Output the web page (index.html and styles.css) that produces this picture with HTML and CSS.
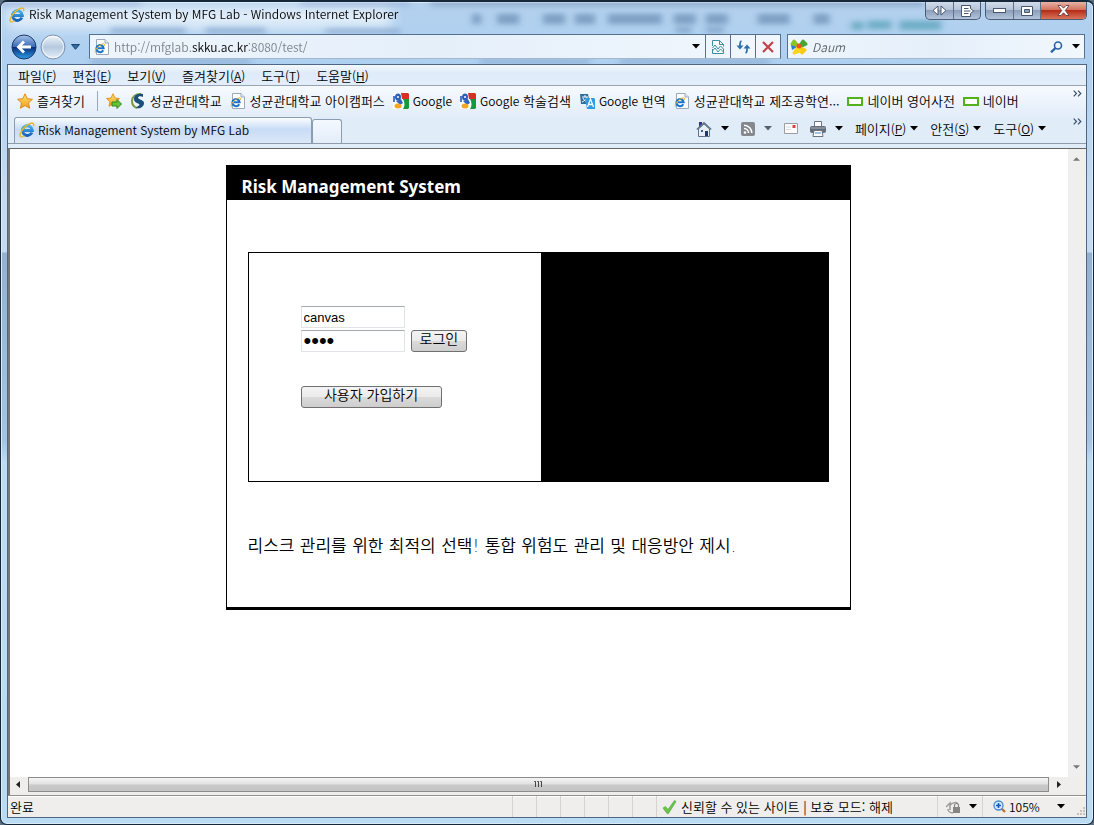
FILE: index.html
```html
<!DOCTYPE html>
<html lang="ko">
<head>
<meta charset="utf-8">
<title>Risk Management System by MFG Lab</title>
<link rel="stylesheet" href="styles.css">
</head>
<body>
<svg class="defs" aria-hidden="true">
  <defs>
    <linearGradient id="gStar" x1="0" y1="0" x2="0" y2="1"><stop offset="0" stop-color="#ffe873"/><stop offset="1" stop-color="#f39a17"/></linearGradient>
    <linearGradient id="gBlue" x1="0" y1="0" x2="0" y2="1"><stop offset="0" stop-color="#46b4ee"/><stop offset="1" stop-color="#1560b8"/></linearGradient>
    <linearGradient id="gBack" x1="0" y1="0" x2="0" y2="1"><stop offset="0" stop-color="#a8c4e8"/><stop offset=".48" stop-color="#3d6cb8"/><stop offset=".52" stop-color="#0c2f7c"/><stop offset="1" stop-color="#2aa0e8"/></linearGradient>
    <linearGradient id="gFwd" x1="0" y1="0" x2="0" y2="1"><stop offset="0" stop-color="#f2f6fb"/><stop offset=".5" stop-color="#b4c9df"/><stop offset="1" stop-color="#e6eff8"/></linearGradient>
    <symbol id="ie" viewBox="0 0 16 16">
      <path d="M12.900 10.500A4.900 4.900 0 1 1 13.300 8.400H5" fill="none" stroke="url(#gBlue)" stroke-width="3"/>
      <path d="M1.600 14.800C-.6 12 5.300 3.600 11.400 1.400c2.600-.9 4 .4 3 2.800" fill="none" stroke="#e9b52c" stroke-width="1.500"/>
      <path d="M1.600 14.800c1 .7 2.500 0 4-1" fill="none" stroke="#e9b52c" stroke-width="1.300"/>
    </symbol>
    <symbol id="page" viewBox="0 0 16 16">
      <path d="M2.500.5h8.500l3.500 3.500v11.500h-12z" fill="#fff" stroke="#9aa9bb"/>
      <path d="M11 .5V4h3.500" fill="#e6edf5" stroke="#9aa9bb"/>
      <path d="M9.200 11.300A3.600 3.600 0 1 1 9.600 9.300H4" fill="none" stroke="#1c74c8" stroke-width="2.100"/>
      <path d="M1.300 13.800C.4 11.500 4 6.500 8.500 5c1.800-.6 2.600.3 2 1.800" fill="none" stroke="#e3ae28"/>
    </symbol>
    <symbol id="star" viewBox="0 0 16 16"><path d="M8 .8l2.200 4.900 5.200.6-3.900 3.600 1.100 5.300L8 12.600l-4.600 2.600 1.100-5.300L.6 6.300l5.200-.6z" fill="url(#gStar)" stroke="#e08a1c"/></symbol>
    <symbol id="google" viewBox="0 0 16 16">
      <rect width="16" height="16" fill="#fff"/><path d="M8 0h7l1 1v5H9z" fill="#d93025"/><path d="M10 6h6v9l-1 1h-5c2-3 2-6 0-10z" fill="#149a3c"/><path d="M0 3h2v6H0z" fill="#4a79cf"/>
      <ellipse cx="5" cy="4" rx="3" ry="3.500" fill="#2f5fb8"/><path d="M3 8l5-2 2 4-3 2z" fill="#3465bc"/><ellipse cx="5" cy="13" rx="3.500" ry="2.500" fill="#f5a623"/><circle cx="5" cy="4" r="1" fill="#fff"/>
    </symbol>
    <symbol id="naver" viewBox="0 0 16 16"><rect x="1" y="5" width="14" height="7" fill="#fff" stroke="#55b01e" stroke-width="2"/></symbol>
    <symbol id="down" viewBox="0 0 8 5"><path d="M0 0h8L4 4.500z" fill="currentColor"/></symbol>
    <symbol id="more" viewBox="0 0 9 7"><path d="M.7.7L3.500 3.500.7 6.300M5 .7l2.800 2.800L5 6.300" fill="none" stroke="#3a4f6c" stroke-width="1.200"/></symbol>
  </defs>
</svg>

<div class="window">
  <svg class="glass" viewBox="0 0 1094 64" preserveAspectRatio="none" aria-hidden="true">
    <defs>
      <filter id="soft" x="-5%" y="-50%" width="110%" height="200%"><feGaussianBlur stdDeviation="3"/></filter>
      <filter id="softer" x="-10%" y="-100%" width="120%" height="300%"><feGaussianBlur stdDeviation="7"/></filter>
    </defs>
    <path d="M6 5h385v22H6z" fill="#eef5fd" opacity=".85" filter="url(#softer)"/>
    <g filter="url(#soft)">
      <path d="M0 0h140v4H0zM300 0h110v4H300z" fill="#8fa6d0" opacity=".6"/>
      <path d="M110 26h75v7H110zM205 26h60v7H205zM325 27h75v6H325z" fill="#688fbb" opacity=".45"/>
      <path d="M430 0h495v4H430z" fill="#7289ad" opacity=".6"/>
      <path d="M472 12h9v11H472zM497 12h22v11H497zM543 12h22v11H543zM575 12h20v11H575zM608 12h54v11H608zM674 12h22v11H674zM706 12h22v11H706zM758 12h32v11H758zM814 12h16v11H814z" fill="#4d6f9b" opacity=".5"/>
      <path d="M676 26h16v6H676zM706 26h18v6H706z" fill="#5f82ab" opacity=".5"/>
      <path d="M852 20h12v9H852zM868 19h24v9H868zM900 19h42v10H900z" fill="#3991a6" opacity=".55"/>
      <path d="M90 60h160v3H90zM480 60h110v3H480zM620 60h150v3H620z" fill="#56789f" opacity=".5"/>
    </g>
  </svg>

  <header class="titlebar">
    <svg class="i16"><use href="#ie"/></svg>
    <span class="caption">Risk Management System by MFG Lab - Windows Internet Explorer</span>
    <div class="winbtns">
      <button aria-label="모니터 전환"><svg width="15" height="11" viewBox="0 0 15 11"><path d="M6 1v9L1 5.500zM9 1v9l5-4.500z" fill="#fff" stroke="#46576f"/></svg></button>
      <button aria-label="창 보내기"><svg width="13" height="12" viewBox="0 0 13 12"><path d="M.5.5h9v3L12.500 6l-3 2.500v3h-9z" fill="#fff" stroke="#46576f"/><path d="M3 3.500h4.500M3 6h6.500M3 8.500h4.500" stroke="#46576f"/></svg></button>
    </div>
    <div class="winbtns">
      <button aria-label="최소화"><svg width="13" height="5" viewBox="0 0 13 5"><rect x=".5" y=".5" width="12" height="4" fill="#fff" stroke="#46576f"/></svg></button>
      <button aria-label="이전 크기로 복원"><svg width="12" height="10" viewBox="0 0 12 10"><path d="M.5.5h11v9H.5z" fill="#fff" stroke="#46576f"/><path d="M3.500 3.500h5v3h-5z" fill="#8fa3bd" stroke="#46576f"/></svg></button>
      <button class="close" aria-label="닫기"><svg width="13" height="11" viewBox="0 0 13 11"><path d="M1 .5h3l2.500 2.700L9 .5h3L8.300 5.500l3.700 5H9L6.500 7.800 4 10.500H1l3.700-5z" fill="#fff" stroke="#5b3038" stroke-width=".8"/></svg></button>
    </div>
  </header>

  <div class="navbar">
    <div class="history">
      <button aria-label="뒤로"><svg width="26" height="26" viewBox="0 0 26 26"><circle cx="13" cy="13" r="12" fill="url(#gBack)" stroke="#1c3563"/><path d="M12 6.500L5.500 13l6.500 6.500 2-2-3-3h9v-3h-9l3-3z" fill="#fff"/></svg></button>
      <button aria-label="앞으로"><svg width="26" height="26" viewBox="0 0 26 26"><circle cx="13" cy="13" r="12" fill="url(#gFwd)" stroke="#7e92ac"/><circle cx="13" cy="13" r="10.500" fill="none" stroke="#fff" opacity=".7"/></svg></button>
      <button class="recent" aria-label="최근 페이지"><svg width="9" height="6" viewBox="0 0 9 6"><path d="M.5.5h8L4.500 5.300z" fill="#2f6ca6" stroke="#1d466f"/></svg></button>
    </div>
    <div class="field address">
      <svg class="i16"><use href="#page"/></svg>
      <a href="#" class="url">http://mfglab.<b>skku.ac.kr</b>:8080/test/</a>
      <button class="drop" aria-label="주소 목록"><svg class="dn"><use href="#down"/></svg></button>
      <button class="cell" aria-label="호환성 보기"><svg width="12" height="14" viewBox="0 0 12 14"><path d="M.5 6V.5h7l4 4v2M7.500.5v4h4M.5 9v4.500h11V9" fill="#fff" stroke="#3b8ea5"/><path d="M.5 8L3 5l3 4 2.500-3L11.500 9M.5 11L3 8l3 4 2.500-3 3 3" fill="none" stroke="#3b8ea5"/></svg></button>
      <button class="cell" aria-label="새로 고침"><svg width="15" height="14" viewBox="0 0 15 14"><path d="M5.500 1C3.500 1.500 4 4 4 7M9.500 13c2-.5 1.500-3 1.500-6" fill="none" stroke="#2f6da8" stroke-width="1.700"/><path d="M.5 5.500h7L4 9.500zM7.500 8.500h7l-3.500-4z" fill="#2f6da8"/></svg></button>
      <button class="cell" aria-label="중지"><svg width="12" height="12" viewBox="0 0 12 12"><path d="M1 1l10 10M11 1L1 11" stroke="#c5414a" stroke-width="2.200"/></svg></button>
    </div>
    <div class="field search">
      <svg class="i18" viewBox="0 0 18 18"><path d="M9 9L4 3 2 6z" fill="#8bc522" stroke="#8bc522" stroke-width="3" stroke-linejoin="round"/><path d="M9 9l4-6 3 3z" fill="#45a631" stroke="#45a631" stroke-width="3" stroke-linejoin="round"/><path d="M9 9l6 3-3 3z" fill="#f6c90d" stroke="#f6c90d" stroke-width="3" stroke-linejoin="round"/><path d="M1 7l6 2-5 3z" fill="#2b7bd0"/><path d="M4 15l4-6 2 4z" fill="#f9d51b" stroke="#f9d51b" stroke-width="3" stroke-linejoin="round"/><circle cx="9" cy="8" r="2.500" fill="#e9551d"/></svg>
      <input type="text" class="query" placeholder="Daum" aria-label="검색">
      <button aria-label="찾기"><svg width="13" height="12" viewBox="0 0 13 12"><circle cx="8" cy="4.500" r="3.500" fill="#eef6ff" stroke="#2b62a5" stroke-width="1.600"/><path d="M5.500 7L1 11.300" stroke="#2b62a5" stroke-width="2.400"/></svg></button>
      <button aria-label="검색 옵션"><svg class="dn"><use href="#down"/></svg></button>
    </div>
  </div>

  <div class="client">
    <nav class="menubar">
      <button>파일<span class="latin">(<u>F</u>)</span></button><button>편집<span class="latin">(<u>E</u>)</span></button><button>보기<span class="latin">(<u>V</u>)</span></button><button>즐겨찾기<span class="latin">(<u>A</u>)</span></button><button>도구<span class="latin">(<u>T</u>)</span></button><button>도움말<span class="latin">(<u>H</u>)</span></button>
    </nav>

    <div class="favorites">
      <button class="favbtn"><svg class="i16"><use href="#star"/></svg>즐겨찾기</button>
      <button class="addfav" aria-label="즐겨찾기 모음에 추가"><svg class="i16" viewBox="0 0 16 16"><use href="#star" width="14" height="14"/><path d="M6 9h5V6.500l4.500 4.500-4.500 4.500V13H6z" fill="#67c232" stroke="#2f8a1c"/></svg></button>
      <a href="#"><svg class="i16" viewBox="0 0 16 16"><path d="M11 1C5 1 2 4 2 8c0 4 2 6 5 7" fill="none" stroke="#7a9a3c" stroke-width="2"/><path d="M13 1C7 0 4 3 4 6c0 3 3 4 5 5 1 1 0 2-1 2l-2 2c4 1 8-1 8-5 0-3-4-3-6-5 0-2 3-2 5-1z" fill="#1c4f78"/></svg>성균관대학교</a>
      <a href="#"><svg class="i16"><use href="#page"/></svg>성균관대학교 아이캠퍼스</a>
      <a href="#"><svg class="i16"><use href="#google"/></svg><span class="latin">Google</span></a>
      <a href="#"><svg class="i16"><use href="#google"/></svg><span><span class="latin">Google</span> 학술검색</span></a>
      <a href="#"><svg class="i16" viewBox="0 0 16 16"><path d="M1 1h8l2 10H2z" fill="#2f6f9c"/><path d="M3 4h6M6 2v2M8 4c-1 3-3 4-5 5M4 5c1 2 2 3 4 4" stroke="#fff" fill="none"/><path d="M6 5h9l1 1v10H8z" fill="#2e9be0"/><path d="M8.500 14l3-8 3 8M9.500 11.500h4" fill="none" stroke="#fff" stroke-width="1.300"/></svg><span><span class="latin">Google</span> 번역</span></a>
      <a href="#"><svg class="i16"><use href="#page"/></svg>성균관대학교 제조공학연...</a>
      <a href="#"><svg class="i16"><use href="#naver"/></svg>네이버 영어사전</a>
      <a href="#"><svg class="i16"><use href="#naver"/></svg>네이버</a>
      <button class="more" aria-label="더 보기"><svg width="9" height="7"><use href="#more"/></svg></button>
    </div>

    <div class="tabrow">
      <button class="tab"><svg class="i16"><use href="#ie"/></svg><span>Risk Management System by MFG Lab</span></button>
      <button class="newtab" aria-label="새 탭"></button>
      <div class="commands">
        <button aria-label="홈"><svg class="i16" viewBox="0 0 16 16"><path d="M3 1h3v5H3z" fill="#34308f"/><path d="M2.500 8v7.500h11V8L8 3z" fill="#e8eef5" stroke="#60748f"/><path d="M.8 8.500L8 1.800l7.200 6.700" fill="none" stroke="#60748f" stroke-width="1.500"/><path d="M9 10h3v5H9z" fill="#1f3770"/><path d="M5 9h2v2H5z" fill="#41618f"/></svg><svg class="dn"><use href="#down"/></svg></button>
        <button class="dim" aria-label="피드"><svg width="14" height="14" viewBox="0 0 14 14"><rect width="14" height="14" rx="2" fill="#85888c"/><circle cx="4" cy="10.500" r="1.300" fill="#fff"/><path d="M3 6.500A4.500 4.500 0 0 1 7.500 11M3 3.200A7.800 7.800 0 0 1 10.800 11" fill="none" stroke="#fff" stroke-width="1.500"/></svg><svg class="dn"><use href="#down"/></svg></button>
        <button aria-label="메일"><svg width="14" height="11" viewBox="0 0 14 11"><path d="M.5.5h13v10H.5z" fill="#fbfbfb" stroke="#9b9da2"/><path d="M2 4h5M2 6.500h5" stroke="#dadce0"/><path d="M8.500 2h3v3h-3z" fill="#d4483f"/></svg></button>
        <button aria-label="인쇄"><svg class="i16" viewBox="0 0 16 16"><path d="M4.500 6V.5h7V6" fill="#fff" stroke="#6c7480"/><rect y="5" width="16" height="7" rx="2" fill="#656d78"/><path d="M1 7h14" stroke="#a9b1bd"/><path d="M4 9.500h8l1 6H3z" fill="#fff" stroke="#6c7480"/><path d="M5 12h6" stroke="#4388c8"/></svg><svg class="dn"><use href="#down"/></svg></button>
        <button class="cmd"><span>페이지<span class="latin">(<u>P</u>)</span></span><svg class="dn"><use href="#down"/></svg></button>
        <button class="cmd"><span>안전<span class="latin">(<u>S</u>)</span></span><svg class="dn"><use href="#down"/></svg></button>
        <button class="cmd"><span>도구<span class="latin">(<u>O</u>)</span></span><svg class="dn"><use href="#down"/></svg></button>
      </div>
      <button class="more" aria-label="더 보기"><svg width="9" height="7"><use href="#more"/></svg></button>
    </div>

    <div class="viewport">
      <main class="page">
        <section class="card">
          <h1>Risk Management System</h1>
          <div class="cardbody">
            <div class="panel">
              <form class="login" onsubmit="return false">
                <div class="creds">
                  <div class="inputs">
                    <input type="text" value="canvas" aria-label="아이디">
                    <input type="password" value="test" aria-label="비밀번호">
                  </div>
                  <button class="btn">로그인</button>
                </div>
                <button class="btn join" type="button">사용자 가입하기</button>
              </form>
              <div class="banner"></div>
            </div>
            <p class="slogan">리스크 관리를 위한 최적의 선택! 통합 위험도 관리 및 대응방안 제시.</p>
          </div>
        </section>
      </main>
      <div class="vscroll">
        <svg width="7" height="4" viewBox="0 0 8 4"><path d="M0 4h8L4 0z" fill="#777"/></svg>
        <svg width="7" height="4" viewBox="0 0 8 4"><path d="M0 0h8L4 4z" fill="#777"/></svg>
      </div>
    </div>
    <div class="hscroll">
      <svg width="4" height="7" viewBox="0 0 4 7"><path d="M4 0v7L0 3.500z" fill="#222"/></svg>
      <div class="thumb"><svg width="9" height="7" viewBox="0 0 9 7"><path d="M1.500 0v6M4.500 0v6M7.500 0v6" stroke="#444"/><path d="M0 .5h2M3 .5h2M6 .5h2" stroke="#666"/></svg></div>
      <svg width="4" height="7" viewBox="0 0 4 7"><path d="M0 0v7l4-3.500z" fill="#222"/></svg>
    </div>

    <footer class="status">
      <span class="done">완료</span>
      <i class="slot"></i><i class="slot"></i><i class="slot"></i><i class="slot"></i><i class="slot"></i><i class="slot"></i>
      <div class="zone"><svg width="15" height="14" viewBox="0 0 15 14"><path d="M1 8l2.500-1.500L6 9.500 12.500.5 14 1.500 6.500 13.500H5z" fill="#6cc44c" stroke="#4aa336" stroke-width=".6"/></svg>신뢰할 수 있는 사이트 | 보호 모드: 해제</div>
      <button class="protect" aria-label="InPrivate 필터링"><svg width="15" height="14" viewBox="0 0 15 14"><path d="M0 7l4-4v2c3-3 7-3 8-1M2 9c0 2 2 4 5 4M4 5v5" fill="none" stroke="#9a9a9a" stroke-width="1.500"/><rect x="7" y="7" width="7" height="6" fill="#858585"/><path d="M8.500 7V5.500a2 2 0 0 1 4 0V7" fill="none" stroke="#858585" stroke-width="1.200"/></svg><svg class="dn"><use href="#down"/></svg></button>
      <button class="zoom"><svg width="13" height="13" viewBox="0 0 13 13"><path d="M8 8l4 4" stroke="#b5763c" stroke-width="2.400"/><circle cx="5.500" cy="5.500" r="4.500" fill="#d9ecff" stroke="#4c87c8" stroke-width="1.300"/><path d="M3 5.500h5M5.500 3v5" stroke="#1a55b0" stroke-width="1.600"/></svg><span>105%</span><svg class="dn"><use href="#down"/></svg></button>
      <svg class="grip" width="9" height="9" viewBox="0 0 9 9"><path d="M6 0h2v2H6zM3 3h2v2H3zM6 3h2v2H6zM0 6h2v2H0zM3 6h2v2H3zM6 6h2v2H6z" fill="#c4c0bc"/></svg>
    </footer>
  </div>
</div>
</body>
</html>
```
FILE: styles.css
```css
* { box-sizing: border-box; }
body {
  margin: 0;
  background: #5a6f80;
  font: 350 13px/18px "Noto Sans CJK KR", sans-serif;
  color: #000;
}
button {
  margin: 0; padding: 0; border: 0; background: none;
  font: inherit; color: inherit; cursor: pointer;
  display: flex; align-items: center;
}
a { color: inherit; text-decoration: none; }
svg { display: block; flex: none; }
input { font: inherit; min-width: 0; }
.defs { position: absolute; width: 0; height: 0; }
.i16 { width: 16px; height: 16px; }
.i18 { width: 18px; height: 18px; }
.dn { width: 8px; height: 5px; }
.latin { font-size: 12px; }

.window {
  position: relative;
  display: flex; flex-direction: column;
  min-height: 100vh;
  padding: 0 6px 6px;
  border: 1px solid #16273a;
  border-top-width: 2px;
  border-radius: 7px;
  background: linear-gradient(#b3d1ee 0, #aed0f1 64px, #c3daf0 180px, #c4dbf2 250px, #93b2d1 251px, #a4c5e4 440px, #bcdcf4 460px, #b9dcf2 100%);
  box-shadow: inset 0 0 0 1px #d9ebf9;
}
.glass { position: absolute; top: 0; left: 0; width: 100%; height: 62px; }
.titlebar, .navbar, .client { position: relative; }

.titlebar { display: flex; align-items: flex-start; height: 32px; gap: 4px; padding-left: 2px; }
.titlebar > .i16 { margin-top: 5px; }
.caption { flex: 1; margin-top: 3px; font-size: 12px; white-space: nowrap; overflow: hidden; }
.winbtns {
  display: flex; height: 18px;
  border: 1px solid #4b5d76; border-top: 0;
  border-radius: 0 0 5px 5px; overflow: hidden;
  background: linear-gradient(#d1dceb 0, #b5c4d8 45%, #8c9eb9 50%, #b3c5dc 100%);
}
.winbtns button { width: 27px; justify-content: center; }
.winbtns button + button { border-left: 1px solid #5f7088; }
.winbtns .close { width: 46px; background: linear-gradient(#e6b3a8 0, #d4735f 45%, #b52d1a 50%, #d9745a 100%); }

.navbar { display: flex; height: 30px; gap: 6px; padding: 0 2px 0 4px; align-items: flex-start; }
.history { display: flex; align-items: center; gap: 3px; width: 72px; flex: none; }
.recent { margin-left: 2px; }
.field {
  display: flex; align-items: center; height: 25px;
  border: 1px solid #55708e; border-bottom-color: #a4b7cb;
  background: linear-gradient(90deg, #eef5fc, #e5effa 50%, #f1f7fd);
}
.address { flex: 1; min-width: 0; padding-left: 4px; }
.url { flex: 1; min-width: 0; margin-left: 4px; font-size: 12px; color: #7c838c; white-space: nowrap; overflow: hidden; }
.url b { font-weight: inherit; color: #000; }
.drop { padding: 0 5px; }
.cell { width: 25px; height: 23px; justify-content: center; border-left: 1px solid #55708e; }
.search { width: 298px; padding: 0 4px 0 2px; gap: 9px; }
.query { flex: 1; border: 0; padding: 0; margin-left: -5px; background: none; outline: 0; font-size: 12px; font-style: italic; }
.query::placeholder { color: #5d646c; opacity: 1; }

.client {
  flex: 1; display: flex; flex-direction: column;
  border: 1px solid #4d6784;
  background: #e1ecf9;
}
.menubar {
  display: flex; gap: 16px; height: 21px; padding: 1px 10px 0;
  border-bottom: 1px solid #98a4b3;
  background: linear-gradient(#f3f8fd, #dfebf9 40%, #e3eefa);
}
.favorites {
  display: flex; align-items: center; gap: 8px; height: 31px; padding: 0 4px 1px 9px;
  background: linear-gradient(#f6fafe, #eaf2fb 60%, #e2edf9);
  white-space: nowrap;
}
.favorites a, .favbtn { display: flex; align-items: center; gap: 4px; }
.favbtn { height: 20px; padding-right: 12px; border-right: 1px solid #9aa7b8; }
.more { margin-left: auto; align-self: flex-start; padding-top: 4px; }

.tabrow { display: flex; align-items: flex-end; height: 27px; padding: 0 4px 0 6px; border-bottom: 1px solid #8e9cae; }
.tab {
  width: 298px; height: 26px; gap: 3px; padding: 0 0 2px 4px;
  border: 1px solid #8b9cb1; border-bottom: 0; border-radius: 3px 3px 0 0;
  background: linear-gradient(#fafdff, #c8dcf6 45%, #dbe8f8);
  font-size: 12px; white-space: nowrap;
}
.newtab { width: 30px; height: 24px; border: 1px solid #8b9cb1; border-bottom: 0; border-radius: 3px 3px 0 0; background: linear-gradient(#f4f9ff, #e3edf9); }
.commands { display: flex; align-items: center; gap: 12px; height: 29px; margin-left: auto; white-space: nowrap; }
.commands button { gap: 9px; }
.commands .cmd { gap: 4px; }
.dim .dn { color: #576170; }
.tabrow .more { margin-left: 27px; padding-top: 1px; }

.viewport { flex: 1; display: flex; margin-top: 4px; border-top: 1px solid #666; border-left: 2px solid #777; background: #fff; }
.page { flex: 1; min-width: 0; padding: 16px 18px 16px 16px; }
.vscroll { width: 18px; padding: 8px 5px; background: #f0efef; display: flex; flex-direction: column; justify-content: space-between; }
.hscroll { display: flex; align-items: center; justify-content: space-between; gap: 8px; height: 18px; padding: 0 25px 3px 6px; background: #f0eeed; border-left: 2px solid #777; }
.thumb { flex: 1; height: 15px; display: flex; align-items: center; justify-content: center; border: 1px solid #8d8d8d; background: linear-gradient(#f4f4f4, #e2e2e2 45%, #c9c9c9 55%, #c4c4c4); }

.status { display: flex; align-items: stretch; height: 22px; border-top: 1px solid #8f8f8f; box-shadow: inset 0 1px #fff; background: #f0eeec; line-height: 21px; white-space: nowrap; }
.done { flex: 1; padding-left: 2px; }
.slot { width: 24px; border-left: 1px solid #d6d2ce; }
.zone { display: flex; align-items: center; gap: 4px; width: 281px; padding-left: 5px; border-left: 1px solid #d6d2ce; }
.protect { width: 45px; gap: 8px; padding-left: 8px; border-left: 1px solid #d6d2ce; }
.zoom { width: 95px; gap: 3px; padding-left: 10px; border-left: 1px solid #d6d2ce; font-size: 12px; }
.zoom .dn { margin-left: 14px; }
.grip { align-self: flex-end; margin: 0 0 1px; }

.card { max-width: 625px; margin: 0 auto; border: 1px solid #000; border-top: 0; border-bottom-width: 3px; }
.card h1 { margin: 0; padding: 10px 15px 2px; background: #000; color: #fff; font: bold 17px/23px "Noto Sans", sans-serif; }
.cardbody { padding: 52px 21px 48px; }
.panel { display: flex; min-height: 230px; border: 1px solid #000; }
.login { flex: 1; padding: 53px 0 0 52px; font-family: "Liberation Sans", "Noto Sans CJK KR", sans-serif; }
.creds { display: flex; align-items: flex-end; gap: 6px; }
.inputs { display: flex; flex-direction: column; gap: 2px; width: 104px; }
.inputs input { height: 22px; padding: 1px 2px; border: 1px solid #e0e3e8; border-top-color: #a5a9b0; background: #fff; font-size: 13px; color: #000; }
.inputs input[type="password"] { font-size: 22px; }
.btn { height: 22px; padding: 0 8px 4px; justify-content: center; border: 1px solid #707070; border-radius: 3px; background: linear-gradient(#f4f4f4, #ebebeb 48%, #dadada 52%, #cecece); font-size: 14px; color: #000; white-space: nowrap; }
.join { width: 141px; margin-top: 34px; }
.banner { width: 287px; background: #000; }
.slogan { margin: 52px 0 0; font-family: "DejaVu Sans", "Noto Sans CJK KR", sans-serif; font-size: 17px; line-height: 25px; }
```
